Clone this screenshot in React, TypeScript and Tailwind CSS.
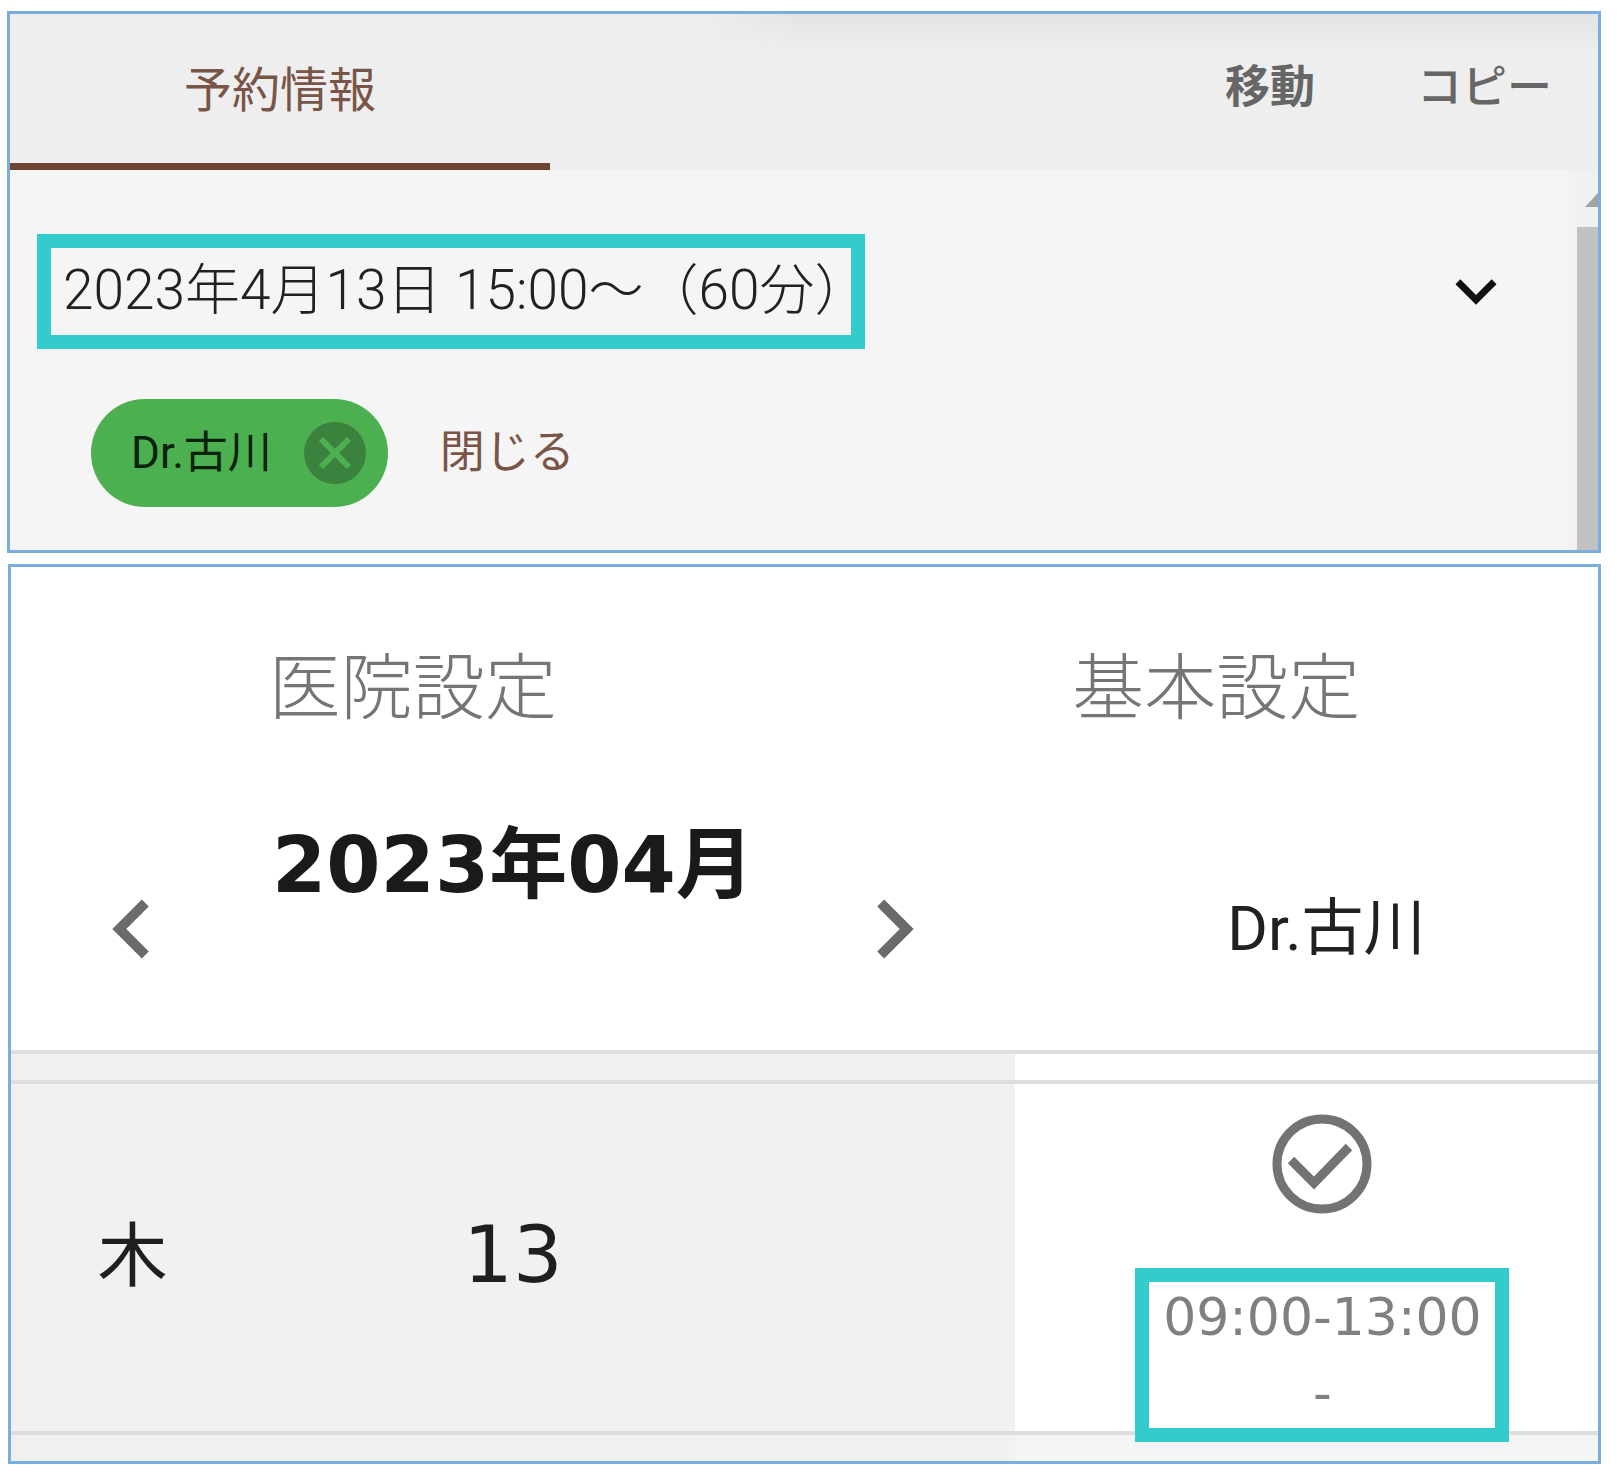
import React from 'react';

interface IconProps {
  className?: string;
}

const ExpandMoreIcon: React.FC<IconProps> = ({ className }) => (
  <svg viewBox="0 0 24 24" fill="currentColor" className={className} aria-hidden="true">
    <path d="M16.59 8.59 12 13.17 7.41 8.59 6 10l6 6 6-6z" />
  </svg>
);

const ChevronLeftIcon: React.FC<IconProps> = ({ className }) => (
  <svg viewBox="0 0 24 24" fill="currentColor" className={className} aria-hidden="true">
    <path d="M15.41 7.41 14 6l-6 6 6 6 1.41-1.41L10.83 12z" />
  </svg>
);

const ChevronRightIcon: React.FC<IconProps> = ({ className }) => (
  <svg viewBox="0 0 24 24" fill="currentColor" className={className} aria-hidden="true">
    <path d="M10 6 8.59 7.41 13.17 12l-4.58 4.59L10 18l6-6z" />
  </svg>
);

const CloseIcon: React.FC<IconProps> = ({ className }) => (
  <svg viewBox="0 0 62 62" fill="none" stroke="currentColor" strokeWidth="6" className={className} aria-hidden="true">
    <path d="M17 17 45 45M45 17 17 45" />
  </svg>
);

const CheckCircleIcon: React.FC<IconProps> = ({ className }) => (
  <svg viewBox="0 0 100 100" fill="none" stroke="currentColor" strokeWidth="9" className={className} aria-hidden="true">
    <circle cx="50" cy="50" r="45" />
    <path d="M19 46 42 69 77 33" />
  </svg>
);

const ReservationPanel: React.FC = () => (
  <section className="overflow-hidden border-3 border-[#7aaede] bg-[#f5f5f5]">
    <header className="relative flex h-[156px] justify-between bg-[#eeeeee]">
      <div className="absolute top-0 right-0 h-9 w-[56%] bg-linear-to-b from-[#e3e3e3] to-[#eeeeee] mask-l-from-90% mask-l-to-100%" />
      <button type="button" className="w-[34%] border-b-7 border-[#6d4535] pt-1 text-[48px] leading-[72px] text-[#795548]">
        予約情報
      </button>
      <div className="relative flex items-center gap-[102px] pr-[46px] pb-2 text-[45px] font-medium text-[#666666]">
        <button type="button" className="font-bold">移動</button>
        <button type="button">コピー</button>
      </div>
    </header>

    <div className="flex h-[380px]">
      <div className="flex-1">
        <div className="flex items-start justify-between pt-16 pr-[52px] pl-[27px]">
          <div className="flex h-[115px] items-center border-14 border-[#33cccc] pb-1 pl-3">
            <h2 className="w-[788px] text-[55px] leading-[64px] font-light whitespace-nowrap text-[#212121]">
              2023年4月13日 15:00～（60分）
            </h2>
          </div>
          <button type="button" aria-label="詳細を開く" className="mt-4 text-[#111111]">
            <ExpandMoreIcon className="size-[82px]" />
          </button>
        </div>
        <div className="flex items-center gap-[52px] pt-[50px] pl-[81px]">
          <div className="flex h-[108px] items-center gap-8 rounded-full bg-[#4caf50] pr-[22px] pl-10 text-[44px] text-[#0c220d]">
            Dr.古川
            <button type="button" aria-label="Dr.古川を外す" className="rounded-full bg-[#3a823d] text-[#4caf50]">
              <CloseIcon className="size-[62px]" />
            </button>
          </div>
          <button type="button" className="text-[45px] text-[#795548]">閉じる</button>
        </div>
      </div>

      {/* scrollbar, cut off by the panel edge */}
      <div className="w-[29px] bg-[#f1f1f1]">
        <svg viewBox="0 0 29 57" className="h-[57px] w-full" aria-hidden="true">
          <path d="M16 37 30 22V37z" fill="#a3a3a3" />
        </svg>
        <div className="ml-2 h-full bg-[#c1c1c1]" />
      </div>
    </div>
  </section>
);

const SchedulePanel: React.FC = () => (
  <section className="ml-px overflow-hidden border-3 border-[#7aaede] bg-white">
    <nav className="-mr-5 grid h-60 grid-cols-2 pt-1 text-[72px] font-light text-[#757575]">
      <button type="button">医院設定</button>
      <button type="button">基本設定</button>
    </nav>

    <div className="-mr-8">
      <div className="flex h-[243px]">
        <div className="flex w-[62%] items-center justify-between px-[62px] text-[#6b6b6b]">
          <button type="button" aria-label="前の月">
            <ChevronLeftIcon className="size-[118px]" />
          </button>
          <h2 className="self-start font-['DejaVu_Sans','Noto_Sans_CJK_JP',sans-serif] text-[78px] leading-[116px] font-bold text-[#1a1a1a]">
            2023年04月
          </h2>
          <button type="button" aria-label="次の月">
            <ChevronRightIcon className="size-[118px]" />
          </button>
        </div>
        <div className="flex flex-1 items-center justify-center pl-2 text-[62px] text-[#212121]">Dr.古川</div>
      </div>

      <table className="w-full table-fixed border-separate border-spacing-0 text-center font-['DejaVu_Sans','Noto_Sans_CJK_JP',sans-serif] text-[#1f1f1f]">
        <colgroup>
          <col className="w-[15%]" />
          <col className="w-[32%]" />
          <col className="w-[15%]" />
          <col className="w-[38%]" />
        </colgroup>
        <tbody>
          <tr className="h-[30px]">
            <td colSpan={3} className="border-t-4 border-[#dedede] bg-[#f1f1f1] p-0" />
            <td className="border-t-4 border-[#dedede] p-0" />
          </tr>
          <tr className="h-[351px]">
            <td className="border-t-4 border-[#dedede] bg-[#f1f1f1] p-0 text-[70px]">木</td>
            <td className="border-t-4 border-[#dedede] bg-[#f1f1f1] p-0 pb-1 text-[78px]">13</td>
            <td className="border-t-4 border-[#dedede] bg-[#f1f1f1] p-0" />
            <td className="border-t-4 border-[#dedede] p-0 align-top">
              <CheckCircleIcon className="mx-auto mt-[30px] size-[100px] text-[#737373]" />
              <div className="relative z-10 mx-auto mt-[54px] -mb-4 flex h-[174px] w-[374px] flex-col justify-center border-14 border-[#33cccc] text-[52px] leading-[76px] text-[#808080]">
                <p>09:00-13:00</p>
                <p>-</p>
              </div>
            </td>
          </tr>
          <tr className="h-[30px]">
            <td colSpan={3} className="border-t-4 border-[#dedede] bg-[#f1f1f1] p-0" />
            <td className="border-t-4 border-[#dedede] bg-[#f5f5f5] p-0" />
          </tr>
        </tbody>
      </table>
    </div>
  </section>
);

export default function App() {
  return (
    <main className="flex flex-col gap-[11px] bg-white pt-[11px] pr-4 pb-3 pl-[7px] font-['Roboto','Noto_Sans_CJK_JP',sans-serif]">
      <ReservationPanel />
      <SchedulePanel />
    </main>
  );
}
